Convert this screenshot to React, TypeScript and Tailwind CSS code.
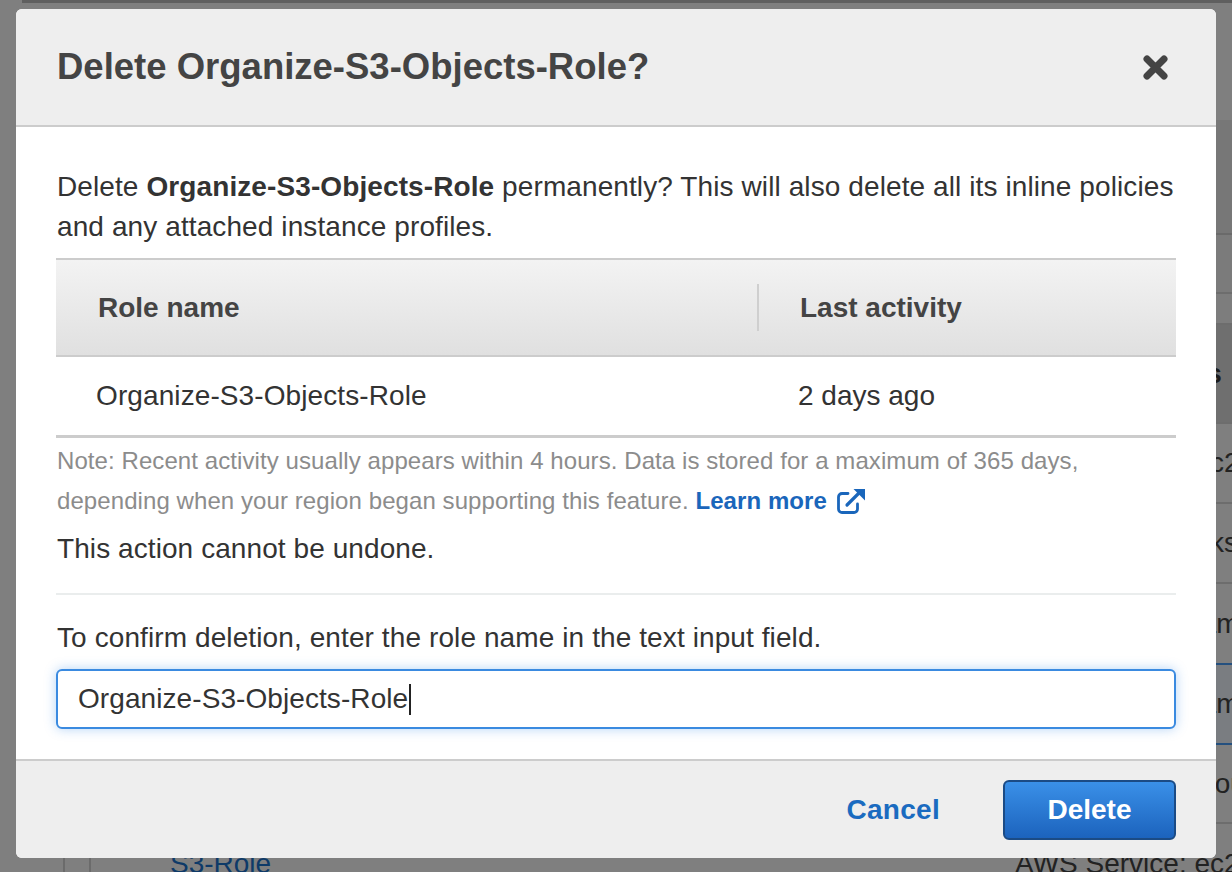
import React from "react";

function BgRow({
  h,
  text,
  link,
  bg,
  bold,
}: {
  h: string;
  text?: string;
  link?: string;
  bg?: string;
  bold?: boolean;
}) {
  return (
    <div className={`flex ${h} ${bg ?? ""} shrink-0`}>
      <div className="w-[23px] shrink-0" />
      <div className="w-[26px] shrink-0 border-l-2 border-[#6b6b6b]" />
      <div className="w-[926px] shrink-0 border-l-2 border-[#6b6b6b] pl-[79px] flex items-center">
        {link && <span className="text-[28px] text-[#0e3a68]">{link}</span>}
      </div>
      <div className="flex-1 flex items-center whitespace-nowrap overflow-hidden">
        {text && (
          <span
            className={`text-[28px] ${bold ? "font-bold text-[#1c1c1c]" : "text-[#222222]"}`}
          >
            {text}
          </span>
        )}
      </div>
    </div>
  );
}

function CloseIcon() {
  return (
    <svg width="25" height="25" viewBox="0 0 25 25" aria-hidden="true">
      <path
        d="M4 4 L21 21 M21 4 L4 21"
        stroke="#444444"
        strokeWidth="7"
        strokeLinecap="round"
        fill="none"
      />
    </svg>
  );
}

function ExternalIcon() {
  return (
    <svg width="30" height="27" viewBox="0 0 30 27" aria-hidden="true" className="inline-block">
      <path
        d="M12 5.5 H6 a3.5 3.5 0 0 0 -3.5 3.5 V21 a3.5 3.5 0 0 0 3.5 3.5 H18 a3.5 3.5 0 0 0 3.5 -3.5 V16"
        stroke="#1a66bb"
        strokeWidth="2.8"
        fill="none"
        strokeLinecap="round"
      />
      <path d="M11 17 L24 4" stroke="#1a66bb" strokeWidth="3.2" strokeLinecap="round" fill="none" />
      <path d="M17.5 1 H29 V12.5 Z" fill="#1a66bb" />
    </svg>
  );
}

export default function App() {
  return (
    <div className="relative h-[872px] w-full overflow-hidden bg-[#7f7f7f] font-['Liberation_Sans',Arial,sans-serif]">
      {/* Underlying page, dimmed */}
      <div className="flex flex-col h-full">
        <div className="h-[3px] shrink-0 ml-[22px] bg-[#5f5f5f]" />
        <div className="h-[117px] shrink-0" />
        <div className="ml-[40px] flex flex-col">
          <div className="h-[113px] shrink-0 bg-[#777777]" />
          <div className="h-[2px] shrink-0 bg-[#6a6a6a]" />
          <div className="h-[57px] shrink-0 bg-[#7b7b7b]" />
          <div className="h-[2px] shrink-0 bg-[#6d6d6d]" />
          <div className="h-[29px] shrink-0 bg-[#7d7d7d]" />
          <div className="h-[2px] shrink-0 bg-[#6d6d6d]" />
          <BgRow h="h-[97px]" bg="bg-[#6f6f6f]" text="Trusted entities" bold />
          <div className="h-[2px] shrink-0 bg-[#6d6d6d]" />
          <BgRow h="h-[78px]" text="AWS Service: ec2" />
          <div className="h-[2px] shrink-0 bg-[#6d6d6d]" />
          <BgRow h="h-[78px]" text="AWS Service: eks" />
          <div className="h-[2px] shrink-0 bg-[#6d6d6d]" />
          <BgRow h="h-[79px]" text="AWS Service: lambda" />
          <div className="h-[2px] shrink-0 bg-[#24507f]" />
          <BgRow h="h-[78px]" bg="bg-[#7a7d81]" text="AWS Service: lambda" />
          <div className="h-[2px] shrink-0 bg-[#24507f]" />
          <BgRow h="h-[77px]" text="AWS Service: cloudformation" />
          <div className="h-[2px] shrink-0 bg-[#6d6d6d]" />
          <BgRow h="h-[79px]" text="AWS Service: ec2" link="S3-Role" />
        </div>
      </div>

      {/* Modal */}
      <div className="absolute left-[16px] top-[9px] w-[1200px] h-[849px] flex flex-col rounded-[6px] bg-white">
        <div className="h-[118px] shrink-0 flex items-center justify-between pl-[41px] pr-[48px] bg-[#eeeeee] border-b-2 border-[#cccccc] rounded-t-[6px]">
          <h1 className="text-[36.5px] font-bold text-[#444444] leading-none">
            Delete Organize-S3-Objects-Role?
          </h1>
          <CloseIcon />
        </div>

        <div className="px-[40px] pt-[40px] pb-[30px] shrink-0">
          <div className="text-[28px] leading-[40px] text-[#333333] pl-[1px] tracking-[0.1px]">
            <div className="whitespace-nowrap">
              Delete <b>Organize-S3-Objects-Role</b> permanently? This will also delete all its inline policies
            </div>
            <div className="whitespace-nowrap">and any attached instance profiles.</div>
          </div>

          <div className="mt-[11px] border-t-2 border-[#cccccc]">
            <div className="h-[97px] flex items-center bg-gradient-to-b from-[#f3f3f3] to-[#e0e0e0] border-b-2 border-[#cccccc]">
              <div className="w-[701px] shrink-0 pl-[42px] text-[28px] font-bold text-[#444444]">
                Role name
              </div>
              <div className="w-[2px] h-[47px] bg-[#cfcfcf] shrink-0" />
              <div className="pl-[41px] text-[28px] font-bold text-[#444444]">Last activity</div>
            </div>
            <div className="h-[81px] flex items-center border-b-[3px] border-[#cccccc]">
              <div className="w-[702px] shrink-0 pl-[40px] text-[28px] text-[#333333] tracking-[0.1px]">
                Organize-S3-Objects-Role
              </div>
              <div className="pl-[40px] text-[28px] text-[#333333]">2 days ago</div>
            </div>
          </div>

          <div className="mt-[3px] text-[24px] leading-[40px] text-[#8c8c8c] pl-[1px] tracking-[0.08px]">
            <div className="whitespace-nowrap">
              Note: Recent activity usually appears within 4 hours. Data is stored for a maximum of 365 days,
            </div>
            <div className="whitespace-nowrap flex items-center">
              <span>depending when your region began supporting this feature.&nbsp;</span>
              <span className="font-bold text-[#1a66bb]">Learn more</span>
              <span className="ml-[9px] flex items-center">
                <ExternalIcon />
              </span>
            </div>
          </div>

          <div className="mt-[8px] text-[28px] leading-[40px] text-[#333333] pl-[1px] tracking-[0.08px]">
            This action cannot be undone.
          </div>

          <div className="mt-[24px] h-[2px] bg-[#eaeded]" />

          <div className="mt-[23px] text-[28px] leading-[40px] text-[#333333] pl-[1px] tracking-[0.1px]">
            To confirm deletion, enter the role name in the text input field.
          </div>

          <div className="mt-[11px] h-[60px] rounded-[6px] border-2 border-[#3a8ae0] shadow-[0_0_12px_rgba(40,130,230,0.35)] bg-white flex items-center pl-[20px]">
            <span className="text-[28px] text-[#333333] leading-none tracking-[0.08px]">
              Organize-S3-Objects-Role
            </span>
            <span className="ml-[1px] w-[2px] h-[31px] bg-[#222222]" />
          </div>
        </div>

        <div className="flex-1 flex items-center justify-end pr-[40px] bg-[#eeeeee] border-t-2 border-[#cccccc] rounded-b-[6px]">
          <span className="text-[28px] font-bold text-[#1a6bc0] mr-[63px] tracking-[0.3px]">Cancel</span>
          <div className="w-[173px] h-[60px] rounded-[6px] border-2 border-[#1b4b85] bg-gradient-to-b from-[#3a90e8] to-[#1c63bd] flex items-center justify-center">
            <span className="text-[28px] font-bold text-white">Delete</span>
          </div>
        </div>
      </div>
    </div>
  );
}
